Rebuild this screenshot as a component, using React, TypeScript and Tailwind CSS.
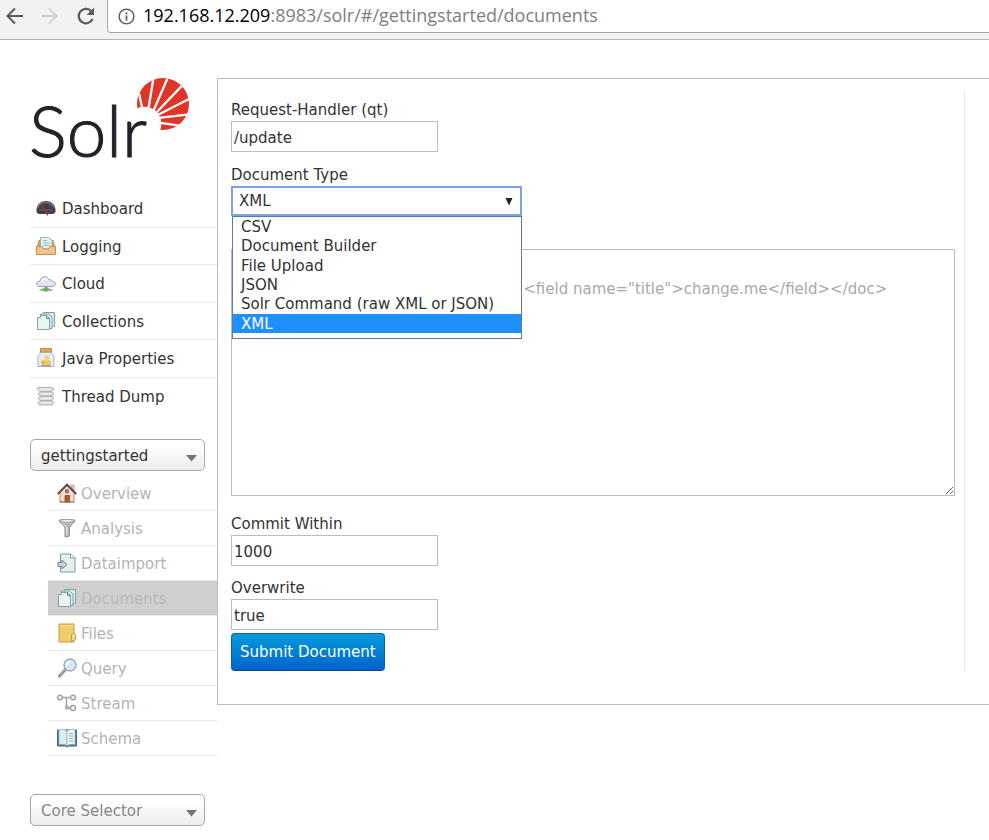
import { useState, type ReactNode } from 'react';

const docTypes = ['CSV', 'Document Builder', 'File Upload', 'JSON', 'Solr Command (raw XML or JSON)', 'XML'];

function Icon({ children }: { children: ReactNode }) {
  return (
    <svg viewBox="0 0 20 20" className="size-5 shrink-0" fill="none" aria-hidden="true">
      {children}
    </svg>
  );
}

const documentsIcon = (
  <Icon>
    <path d="M7.500 1.500h11v14h-11z" fill="#dcebea" stroke="#7fa3a2" />
    <path d="M4.500 3h8l3.500 3v11.500H4.500z" fill="#dcebea" stroke="#7fa3a2" />
    <path d="M1.500 6.500h3v-2h6l3 3v11h-12z" fill="#e9f5f4" stroke="#7fa3a2" />
    <path d="M10.500 4.500v3h3" stroke="#5f8686" />
  </Icon>
);

const mainItems: { label: string; icon: ReactNode }[] = [
  {
    label: 'Dashboard',
    icon: (
      <Icon>
        <path d="M.5 14C0 7 4 3 10 3s10 4 9.500 11c-1 2-3 2-5 2h-9c-2 0-4 0-5-2z" fill="#413d40" />
        <path d="M2 10C3 6 6 4.500 10 4.500S17 6 18 10" stroke="#77737a" strokeWidth="1.500" />
        <path d="M3 12h14M6 7l1 2M14 7l-1 2" stroke="#656068" />
        <path d="M5.500 8l6 7" stroke="#8f3a42" strokeWidth="1.200" />
        <path d="M9 14h4l-1.500 4z" fill="#a63342" />
      </Icon>
    ),
  },
  {
    label: 'Logging',
    icon: (
      <Icon>
        <path d="M2.500 4h15l2 8H.5z" fill="#d69a5a" />
        <path d="M4.500 1.500h8l3.500 3V13h-11.500z" fill="#e7f4f5" stroke="#8fb4b8" />
        <path d="M7 4.500h4M7 7h7M7 9.500h7" stroke="#8bbcc9" strokeWidth="1.200" />
        <path d="M.5 10.500h5.500l1.500 2.500h5l1.500-2.500h5.500v8H.5z" fill="#f3c288" stroke="#c58b50" />
      </Icon>
    ),
  },
  {
    label: 'Cloud',
    icon: (
      <Icon>
        <ellipse cx="10" cy="17" rx="7" ry="1.500" fill="#a9aaa9" />
        <path d="M8.500 12h3v3.500H14L10 19l-4-3.500h2.500z" fill="#4db65a" />
        <path d="M4 13.500C-.5 13.500-.5 8.500 4 8c.5-5 7-6 9-1 1-.8 3-.3 3 1.500 4.500 0 4.500 5 0 5z" fill="#e3e4ee" stroke="#9b9eb2" />
        <path d="M6 8c1-3 4-3.500 6-1" stroke="#fff" strokeWidth="1.500" />
      </Icon>
    ),
  },
  { label: 'Collections', icon: documentsIcon },
  {
    label: 'Java Properties',
    icon: (
      <Icon>
        <path d="M4.500 4h11c0 2 2.500 2.500 2.500 5v9.500H2V9c0-2.500 2.500-3 2.500-5z" fill="#e4eff6" stroke="#9bb3c6" />
        <path d="M4.500.5h11v3.500h-11z" fill="#dbab63" stroke="#c18b3d" />
        <circle cx="11" cy="9.500" r="2.500" fill="#f6d27f" />
        <circle cx="7.500" cy="14.500" r="2.500" fill="#edb750" />
        <circle cx="12.500" cy="14.500" r="2.700" fill="#f2c267" />
        <path d="M5 17.500h10" stroke="#d29839" />
      </Icon>
    ),
  },
  {
    label: 'Thread Dump',
    icon: (
      <Icon>
        <path d="M2 1.500h14l2 1.500-2 2.500H4L1.500 3.500zM4 6h12l2 1.500-2 2.500H4L2 8zM4 10.500h12l2 1.500-2 2.500H4L2 12.500zM4 15h12l2 1.500-2 2.500H3.500L1.500 17z" fill="#dedede" stroke="#b2b2b2" />
        <path d="M5 3h10M5 7.500h10M5 12h10M5 16.500h10" stroke="#f3f3f3" />
      </Icon>
    ),
  },
];

const coreItems: { label: string; icon: ReactNode; active?: boolean }[] = [
  {
    label: 'Overview',
    icon: (
      <Icon>
        <path d="M14 2h3v6h-3z" fill="#e9c9bd" stroke="#b08879" strokeWidth=".7" />
        <path d="M3 9.500L10 2.500l7 7v9.500H3z" fill="#f2dcc6" stroke="#a57a64" strokeWidth=".8" />
        <path d="M.8 11L10 1.500l9.200 9.500" stroke="#5d4442" strokeWidth="1.800" />
        <path d="M8 12.500h4.500V19H8z" fill="#a65c2b" stroke="#75401f" strokeWidth=".7" />
        <path d="M8.500 6.500h3v3.500h-3z" fill="#778" stroke="#9b755e" strokeWidth=".7" />
        <path d="M2.500 19h15" stroke="#a2724d" />
      </Icon>
    ),
  },
  {
    label: 'Analysis',
    icon: (
      <Icon>
        <path d="M2 2.500c0-1.500 16-1.500 16 0 0 2-5.500 5-5.500 7.500v8l-4.500 1v-9c0-2.500-6-5.500-6-7.500z" fill="#b4b6bf" stroke="#8b8e98" />
        <ellipse cx="10" cy="2.800" rx="7" ry="1.300" fill="#f2f2f5" stroke="#9a9ca5" strokeWidth=".7" />
        <path d="M6 5.500l3.800 4v8" stroke="#f4f4f6" />
      </Icon>
    ),
  },
  {
    label: 'Dataimport',
    icon: (
      <Icon>
        <path d="M3.500 1h10l4.500 3.500V19H3.500z" fill="#e2f1f0" stroke="#719e9d" />
        <path d="M13.500 1v4H18" fill="#fff" stroke="#719e9d" />
        <path d="M1 9.500h4V7l5 4.500-5 4.500v-2.500H1z" fill="#c9d2d6" stroke="#74858e" />
      </Icon>
    ),
  },
  { label: 'Documents', icon: documentsIcon, active: true },
  {
    label: 'Files',
    icon: (
      <Icon>
        <path d="M2 1h15v18H2z" fill="#f3cc6a" stroke="#c99a3d" />
        <path d="M3 2.500h13" stroke="#fbe3a0" />
        <path d="M14.500 18.500v-6.500l2-2.500 2 2.500v4.500z" fill="#f7dd93" stroke="#c99a3d" />
      </Icon>
    ),
  },
  {
    label: 'Query',
    icon: (
      <Icon>
        <path d="M9 11l-6.500 7" stroke="#8e8e97" strokeWidth="3" strokeLinecap="round" />
        <path d="M9 10.500l-6 6.500" stroke="#bfc0c8" />
        <circle cx="13" cy="7" r="6" fill="#d8e9f5" stroke="#a5a9b5" strokeWidth="1.500" />
        <path d="M9.500 7c.3-2 1.500-3 3.500-3.200" stroke="#fff" strokeWidth="1.500" />
      </Icon>
    ),
  },
  {
    label: 'Stream',
    icon: (
      <Icon>
        <path d="M5 4.500h10M9.500 4.500v10.500h6" stroke="#a3a3a3" strokeWidth="1.400" />
        <g fill="#ededed" stroke="#9a9a9a" strokeWidth="1.200">
          <circle cx="3" cy="4.500" r="2.400" />
          <circle cx="16" cy="4.500" r="2.400" />
          <circle cx="16" cy="15" r="2.600" />
          <circle cx="10" cy="14.500" r="1.300" />
        </g>
      </Icon>
    ),
  },
  {
    label: 'Schema',
    icon: (
      <Icon>
        <path d="M.5 2v16h8l1.500 1 1.500-1h8V2z" fill="#5a7a92" stroke="#47667c" />
        <path d="M2 1.500c3-.5 6 0 8 1.500v14.500c-2-1-5-1.500-8-1z" fill="#dceff2" stroke="#8db2ba" strokeWidth=".7" />
        <path d="M18 1.500c-3-.5-6 0-8 1.500v14.500c2-1 5-1.500 8-1z" fill="#eef7f5" stroke="#8db2ba" strokeWidth=".7" />
        <path d="M12 5.500h4M12 8h4.500M12 10.500h4M12 13h4.500" stroke="#8bb4ac" />
      </Icon>
    ),
  },
];

function BrowserBar() {
  return (
    <header className="flex h-10 items-start border-b border-[#b3b3b3] bg-[#f2f2f2]">
      <nav className="flex h-8 w-[107px] shrink-0 items-center gap-4 pl-1" aria-label="Browser">
        <button aria-label="Back">
          <svg viewBox="0 0 20 20" className="size-5" fill="none" stroke="#5a5a5a" strokeWidth="2">
            <path d="M19 10H4M11 2.500L3.500 10l7.500 7.500" />
          </svg>
        </button>
        <button aria-label="Forward">
          <svg viewBox="0 0 20 20" className="size-5" fill="none" stroke="#d2d2d2" strokeWidth="2">
            <path d="M1 10h15M9 2.500l7.500 7.500L9 17.500" />
          </svg>
        </button>
        <button aria-label="Reload">
          <svg viewBox="0 0 20 20" className="size-5" fill="none" stroke="#5a5a5a" strokeWidth="2.200">
            <path d="M15.500 5.500A7.200 7.200 0 1 0 16.500 13" />
            <path d="M18 1.500v7.500h-7.500z" fill="#5a5a5a" stroke="none" />
          </svg>
        </button>
      </nav>
      <div className="flex h-[33px] min-w-0 flex-1 items-center gap-2 rounded-bl-sm border-b border-l border-[#a8a8a8] bg-white pl-[10px]">
        <svg viewBox="0 0 18 18" className="size-[17px] shrink-0" fill="none" stroke="#5f5f5f" strokeWidth="1.600" aria-hidden="true">
          <circle cx="9" cy="9" r="7.800" />
          <path d="M9 8v5.500M9 4.500v2" strokeWidth="1.800" />
        </svg>
        <span className="pb-[2px] font-['Open_Sans',sans-serif] text-[18px] leading-[30px] whitespace-nowrap text-[#808080]">
          <span className="text-black">192.168.12.209</span>:8983/solr/#/gettingstarted/documents
        </span>
      </div>
    </header>
  );
}

function Logo() {
  return (
    <a href="#/" aria-label="Solr" className="block h-[92px] w-40">
      <svg viewBox="0 0 160 92" className="h-[92px] w-40 overflow-visible">
        <text x="-1" y="79" fill="#23222a" stroke="#23222a" strokeWidth="1" fontSize="71" fontWeight="300" fontFamily="Lato, sans-serif">
          Solr
        </text>
        <defs>
          <clipPath id="sun">
            <circle cx="79" cy="79" r="79" />
          </clipPath>
        </defs>
        <svg x="107" y="0" width="52" height="52" viewBox="0 0 158 158">
          <g clipPath="url(#sun)">
            <path
              fill="#de3526"
              fillRule="evenodd"
              d="M0 0h158v158h-158zM-30 139a52 52 0 1 0 104 0a52 52 0 1 0-104 0z"
            />
            <path
              d="M2 28L20 110M50 0L32 110M94-2L48 104M140 20L56 108M162 62L60 114M162 110L60 122M150 148L56 134"
              stroke="#fff"
              strokeWidth="7"
            />
            <path d="M-30 139a52 52 0 1 0 104 0a52 52 0 1 0-104 0z" fill="#fff" fillOpacity="0" />
          </g>
        </svg>
      </svg>
    </a>
  );
}

function CoreSelect({ label, value, muted }: { label: string; value: string; muted?: boolean }) {
  return (
    <div className="relative w-[175px]">
      <select
        aria-label={label}
        className={`h-8 w-full appearance-none rounded-[5px] border border-[#a6a6a6] bg-linear-to-b from-white from-20% to-[#ececec] px-[10px] pt-[2px] ${muted ? 'text-[#888888]' : 'text-[#333333]'}`}
      >
        <option>{value}</option>
      </select>
      <svg viewBox="0 0 11 7" className="pointer-events-none absolute top-4 right-2 h-[7px] w-[11px]" aria-hidden="true">
        <path d="M0 0h11L5.500 6.500z" fill="#757575" />
      </svg>
    </div>
  );
}

function Sidebar() {
  return (
    <aside className="w-[217px] shrink-0 pl-[30px]">
      <Logo />
      <ul className="mt-5 grid h-[225px] grid-rows-6">
        {mainItems.map((item) => (
          <li key={item.label} className="border-b border-[#e9e9e9] last:border-0">
            <a href="#/" className="flex h-full items-center gap-[6px] pl-[6px] text-[#333333]">
              {item.icon}
              <span className="pt-[2px]">{item.label}</span>
            </a>
          </li>
        ))}
      </ul>
      <div className="mt-6">
        <CoreSelect label="Core" value="gettingstarted" />
      </div>
      <ul className="mt-[5px] ml-[18px]">
        {coreItems.map((item) => (
          <li key={item.label} className={`h-[35px] border-b border-[#e9e9e9] ${item.active ? 'bg-[#cfcfcf]' : ''}`}>
            <a href="#/" className={`flex h-full items-center gap-1 pl-[9px] ${item.active ? 'text-[#b9b9b9]' : 'text-[#b4b4b4]'}`}>
              {item.icon}
              <span className="pt-[2px]">{item.label}</span>
            </a>
          </li>
        ))}
      </ul>
      <div className="mt-[38px]">
        <CoreSelect label="Core Selector" value="Core Selector" muted />
      </div>
    </aside>
  );
}

function TextField({ id, label, value }: { id: string; label: string; value: string }) {
  return (
    <div>
      <label htmlFor={id} className="block pt-[2px] leading-[22px]">
        {label}
      </label>
      <input id={id} defaultValue={value} className="block h-[31px] w-[207px] border border-[#bcbcbc] bg-white px-[2px] pt-[2px]" />
    </div>
  );
}

function DocumentForm() {
  const [type, setType] = useState('XML');
  return (
    <form className="min-w-0 flex-1 pt-[6px] pr-[9px]" onSubmit={(e) => e.preventDefault()}>
      <TextField id="qt" label="Request-Handler (qt)" value="/update" />
      <div className="relative mt-[10px] w-[291px]">
        <label htmlFor="type" className="block pt-[2px] leading-[22px]">
          Document Type
        </label>
        <select
          id="type"
          value={type}
          onChange={(e) => setType(e.target.value)}
          className="block h-[30px] w-full appearance-none border-2 border-[#7ba2e2] bg-white px-[6px] outline-none"
        >
          {docTypes.map((t) => (
            <option key={t}>{t}</option>
          ))}
        </select>
        <svg viewBox="0 0 8 8" className="pointer-events-none absolute right-[9px] bottom-[10px] size-2" aria-hidden="true">
          <path d="M.5 0h7L4 7.500z" fill="#222222" />
        </svg>
        <div className="absolute top-full right-0 left-px z-10 border border-[#5a79a8] bg-white pb-[5px]">
          <ul role="listbox" aria-label="Document Type" className="grid h-[116px] grid-rows-6">
            {docTypes.map((t) => (
              <li
                key={t}
                role="option"
                aria-selected={t === type}
                onClick={() => setType(t)}
                className={`px-2 leading-5 ${t === type ? 'bg-[#1e90ff] text-white' : ''}`}
              >
                {t}
              </li>
            ))}
          </ul>
        </div>
      </div>
      <textarea
        aria-label="Documents"
        className="mt-[33px] block h-[247px] w-full border border-[#bcbcbc] bg-white py-[11px] leading-[19px] placeholder:text-[#a9a9a9]"
        placeholder={'<doc>\n<field name="id">change.me</field><field name="title">change.me</field></doc>'}
      />
      <div className="mt-[15px] flex flex-col gap-[9px]">
        <TextField id="commit" label="Commit Within" value="1000" />
        <TextField id="overwrite" label="Overwrite" value="true" />
      </div>
      <button
        type="submit"
        className="mt-[3px] block h-[38px] rounded-[4px] border border-[#0064b4] border-b-[#004a8f] bg-linear-to-b from-[#0c9bdc] to-[#0062cc] px-2 text-white"
      >
        Submit Document
      </button>
    </form>
  );
}

export default function App() {
  return (
    <div className="min-h-screen bg-white font-['DejaVu_Sans',Verdana,sans-serif] text-[15px] text-[#333333]">
      <BrowserBar />
      <div className="flex items-start pt-[38px]">
        <Sidebar />
        <main className="flex min-w-0 flex-1 border-y border-l border-[#bcbcbc] pt-3 pb-[33px] pl-[13px]">
          <DocumentForm />
          <div className="w-[25px] shrink-0 border-l border-[#e6e6e6]" />
        </main>
      </div>
    </div>
  );
}
